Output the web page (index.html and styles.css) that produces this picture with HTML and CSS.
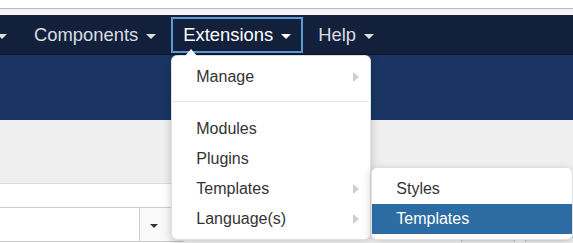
FILE: index.html
```html
<!DOCTYPE html>
<html lang="en">
<head>
<meta charset="utf-8">
<title>Extensions menu</title>
<link rel="stylesheet" href="styles.css">
</head>
<body>
<div class="topbar"></div>
<div class="subbar"></div>
<nav class="navbar">
  <ul class="nav">
    <li class="nav-item first"><a class="nav-link"><span class="hidden-label"></span><span class="caret"></span></a></li>
    <li class="nav-item"><a class="nav-link">Components<span class="caret"></span></a></li>
    <li class="nav-item open"><a class="nav-link">Extensions<span class="caret"></span></a>
      <ul class="dropdown">
        <li class="dd-item has-sub">Manage<span class="arrow"></span></li>
        <li class="divider"></li>
        <li class="dd-item">Modules</li>
        <li class="dd-item">Plugins</li>
        <li class="dd-item has-sub">Templates<span class="arrow"></span>
          <ul class="dropdown submenu">
            <li class="dd-item">Styles</li>
            <li class="dd-item active">Templates</li>
          </ul>
        </li>
        <li class="dd-item has-sub">Language(s)<span class="arrow"></span></li>
      </ul>
    </li>
    <li class="nav-item"><a class="nav-link">Help<span class="caret"></span></a></li>
  </ul>
</nav>
<header class="header"></header>
<div class="toolbar"></div>
<div class="filters"></div>
<div class="select-row">
  <div class="select">
    <span class="select-text"></span>
    <span class="select-btn"><span class="caret dark"></span></span>
  </div>
  <div class="btn-group">
    <span class="btn btn-a"></span>
    <span class="btn btn-b"></span>
  </div>
</div>
</body>
</html>
```
FILE: styles.css
```css
html, body {
  margin: 0;
  padding: 0;
}
body {
  font-family: "Liberation Sans", Arial, sans-serif;
  background: #fff;
  width: 573px;
  height: 243px;
  overflow: hidden;
}
.topbar {
  height: 8px;
  background: #fff;
  border-bottom: 1px solid #bdbdbd;
}
.subbar {
  height: 6px;
  background: linear-gradient(#f0f0f0, #f8f8f8);
}
.navbar {
  height: 39px;
  background: #12203c;
  border-bottom: 1px solid #0a1529;
  position: relative;
  z-index: 5;
}
.nav {
  display: flex;
  list-style: none;
  margin: 0;
  padding: 0;
  gap: 3px;
}
.nav-item {
  position: relative;
  height: 39px;
  flex-shrink: 0;
}
.nav-item.first {
  margin-left: -87px;
}
.hidden-label {
  display: inline-block;
  width: 64px;
}
.nav-link {
  display: flex;
  align-items: center;
  gap: 8px;
  box-sizing: border-box;
  height: 36px;
  margin-top: 2px;
  padding: 0 10px;
  border: 2px solid transparent;
  color: #dcdde0;
  font-size: 18.4px;
  white-space: nowrap;
}
.open > .nav-link {
  border-color: #5e9ad3;
  color: #fff;
}
.caret {
  display: inline-block;
  width: 0;
  height: 0;
  border-left: 5px solid transparent;
  border-right: 5px solid transparent;
  border-top: 5px solid currentColor;
  margin-top: 2px;
}
.caret.dark {
  color: #333;
  border-left-width: 4px;
  border-right-width: 4px;
  border-top-width: 4px;
}
.dropdown {
  position: absolute;
  top: 40px;
  left: 0;
  width: 200px;
  box-sizing: border-box;
  margin: 0;
  padding: 6px 0 5px;
  list-style: none;
  background: #fff;
  border: 1px solid rgba(0, 0, 0, 0.12);
  border-radius: 6px;
  box-shadow: 0 3px 8px rgba(0, 0, 0, 0.22);
  font-size: 16px;
  color: #333;
}
.nav-item > .dropdown::before {
  content: "";
  position: absolute;
  top: -7px;
  left: 13px;
  border-left: 6px solid transparent;
  border-right: 6px solid transparent;
  border-bottom: 7px solid #fff;
}
.dd-item {
  position: relative;
  display: flex;
  align-items: center;
  justify-content: space-between;
  height: 30px;
  padding: 0 11px 0 24px;
  white-space: nowrap;
}
.arrow {
  width: 0;
  height: 0;
  border-top: 5px solid transparent;
  border-bottom: 5px solid transparent;
  border-left: 6px solid #cfcfcf;
}
.divider {
  height: 1px;
  margin: 9px 1px 12px;
  background: #e5e5e5;
}
.submenu {
  top: -7px;
  left: calc(100% + 1px);
  width: 202px;
  border-radius: 6px;
}
.dd-item.active {
  background: #2d6ca2;
  color: #fff;
}
.header {
  height: 65px;
  background: #1a3563;
}
.toolbar {
  height: 63px;
  background: #efefef;
  border-bottom: 1px solid #dcdcdc;
}
.filters {
  height: 23px;
  background: #fff;
}
.select-row {
  display: flex;
  align-items: flex-start;
  gap: 10px;
  height: 36px;
}
.select {
  display: flex;
  flex-shrink: 0;
  box-sizing: border-box;
  height: 35px;
  width: 196px;
  margin-left: -10px;
  border: 1px solid #ccc;
  border-radius: 0 4px 4px 0;
  background: #fff;
}
.select-text {
  flex: 1;
}
.select-btn {
  width: 46px;
  display: flex;
  align-items: center;
  justify-content: center;
  border-left: 1px solid #ccc;
  background: #f9f9f9;
  padding-right: 18px;
  box-sizing: border-box;
}
.btn-group {
  display: flex;
  flex-shrink: 0;
  gap: 10px;
  margin-left: 265px;
  margin-top: 30px;
}
.btn {
  display: block;
  height: 4px;
  border: 1px solid #c8c8c8;
  border-bottom: 0;
  border-radius: 4px 4px 0 0;
  background: #f6f6f6;
}
.btn-a { width: 52px; }
.btn-b { width: 60px; }
```
